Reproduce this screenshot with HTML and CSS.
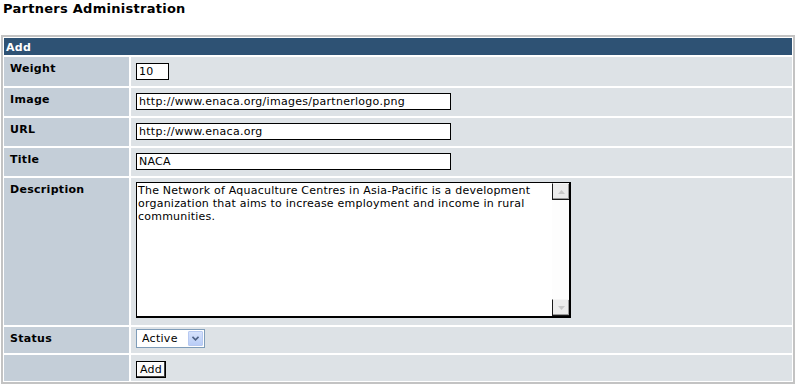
FILE: index.html
```html
<!DOCTYPE html>
<html>
<head>
<meta charset="utf-8">
<title>Partners Administration</title>
<link rel="stylesheet" href="styles.css">
</head>
<body>
<h1 class="title">Partners Administration</h1>
<div class="panel">
  <div class="panel-head">Add</div>
  <div class="form-grid">
    <div class="lbl">Weight</div>
    <div class="val val-weight"><input class="txt txt-sm" type="text" value="10"></div>

    <div class="lbl">Image</div>
    <div class="val"><input class="txt txt-lg" type="text" value="http://www.enaca.org/images/partnerlogo.png"></div>

    <div class="lbl">URL</div>
    <div class="val"><input class="txt txt-lg" type="text" value="http://www.enaca.org"></div>

    <div class="lbl">Title</div>
    <div class="val"><input class="txt txt-lg" type="text" value="NACA"></div>

    <div class="lbl">Description</div>
    <div class="val val-desc">
      <div class="area">
        <textarea class="area-text">The Network of Aquaculture Centres in Asia-Pacific is a development organization that aims to increase employment and income in rural communities.</textarea>
        <div class="scroll">
          <span class="scroll-btn"><svg width="7" height="4" viewBox="0 0 7 4"><path d="M3.5 0L7 4H0Z" fill="#c9c9c9"/></svg></span>
          <span class="scroll-track"></span>
          <span class="scroll-btn"><svg width="7" height="4" viewBox="0 0 7 4"><path d="M0 0H7L3.5 4Z" fill="#c9c9c9"/></svg></span>
        </div>
      </div>
    </div>

    <div class="lbl">Status</div>
    <div class="val val-status">
      <div class="sel">
        <select class="sel-input"><option>Active</option><option>Inactive</option></select>
        <span class="sel-btn"><svg width="7" height="5" viewBox="0 0 7 5"><path d="M0.5 0.8L3.5 3.8L6.5 0.8" fill="none" stroke="#4d6185" stroke-width="1.6"/></svg></span>
      </div>
    </div>

    <div class="lbl"></div>
    <div class="val val-btn"><button class="btn" type="button">Add</button></div>
  </div>
</div>
</body>
</html>
```

FILE: styles.css
```css
html, body {
  margin: 0;
  padding: 0;
  background: #ffffff;
}

body {
  padding: 1px 1px 0 1px;
  font-family: "DejaVu Sans", Verdana, sans-serif;
  font-size: 11px;
  color: #000;
}

.title {
  margin: 0 0 18px 2px;
  font-size: 13px;
  line-height: 16px;
  font-weight: bold;
  letter-spacing: 0.27px;
  color: #000;
}

.panel {
  border: 2px solid #c3c3c3;
  padding: 1px;
  background: #ffffff;
  display: flex;
  flex-direction: column;
  gap: 2px;
}

.panel-head {
  height: 17px;
  box-sizing: border-box;
  padding: 3px 0 0 2px;
  background: #2e5274;
  color: #fff;
  font-weight: bold;
  font-size: 11px;
  line-height: 13px;
  letter-spacing: 0.3px;
}

.form-grid {
  display: grid;
  grid-template-columns: 125px 1fr;
  grid-template-rows: 29px 28px 28px 28px 147px 26px 26px;
  gap: 2px;
}

.lbl {
  background: #c4ced8;
  padding: 5px 0 0 6px;
  font-weight: bold;
  font-size: 11px;
  line-height: 13px;
  letter-spacing: 0.3px;
}

.val {
  background: #dde2e6;
  padding: 5px 0 0 5px;
  display: flex;
  align-items: flex-start;
}

.val-weight { padding-top: 6px; }
.val-desc { padding-top: 4px; }
.val-status { padding-top: 2px; }
.val-btn { padding-top: 6px; }

.txt {
  box-sizing: border-box;
  height: 17px;
  margin: 0;
  border: 1px solid #000;
  padding: 0 2px;
  background: #fff;
  font-family: "DejaVu Sans", Verdana, sans-serif;
  font-size: 11px;
  letter-spacing: 0.28px;
  color: #000;
  outline: none;
}

.txt-sm { width: 33px; }
.txt-lg { width: 315px; }

.area {
  box-sizing: border-box;
  width: 435px;
  height: 136px;
  border: 1px solid #000;
  border-right-width: 2px;
  border-bottom-width: 2px;
  background: #fff;
  display: flex;
}

.area-text {
  flex: 1;
  margin: 0;
  border: 0;
  padding: 1px 1px;
  resize: none;
  overflow: hidden;
  font-family: "DejaVu Sans", Verdana, sans-serif;
  font-size: 11px;
  line-height: 13px;
  letter-spacing: 0.22px;
  color: #000;
  background: #fff;
  outline: none;
}

.scroll {
  width: 17px;
  display: flex;
  flex-direction: column;
  background: #fff;
}

.scroll-btn {
  box-sizing: border-box;
  height: 17px;
  display: flex;
  align-items: center;
  justify-content: center;
  background: #ececec;
  border-left: 1px solid #1a1a1a;
  border-top: 1px solid #f6f6f6;
  border-bottom: 1px solid #1a1a1a;
  box-shadow: inset -1px -1px 0 #9a9a9a;
}

.scroll-track {
  flex: 1;
  background: #fdfdfd;
}

.sel {
  box-sizing: border-box;
  width: 69px;
  height: 19px;
  border: 1px solid #7f9db9;
  background: #fff;
  display: flex;
  align-items: center;
  padding-right: 1px;
}

.sel-input {
  appearance: none;
  -webkit-appearance: none;
  flex: 1;
  min-width: 0;
  height: 15px;
  margin: 0;
  border: 0;
  padding: 0 0 0 5px;
  background: transparent;
  font-family: "DejaVu Sans", Verdana, sans-serif;
  font-size: 11px;
  line-height: 15px;
  letter-spacing: 0.28px;
  color: #000;
  outline: none;
}

.sel-btn {
  box-sizing: border-box;
  width: 15px;
  height: 15px;
  display: flex;
  align-items: center;
  justify-content: center;
  border: 1px solid #b7c9f1;
  border-radius: 1px;
  background: linear-gradient(#d6e2fc, #b9cdf7);
}

.btn {
  box-sizing: border-box;
  width: 30px;
  height: 17px;
  margin: 0;
  padding: 0;
  border: 1px solid #000;
  box-shadow: inset -1px -1px 0 #404040, inset 1px 1px 0 #fff;
  background: #fbfbfb;
  font-family: "DejaVu Sans", Verdana, sans-serif;
  font-size: 11px;
  line-height: 13px;
  letter-spacing: 0.28px;
  color: #000;
}
```
